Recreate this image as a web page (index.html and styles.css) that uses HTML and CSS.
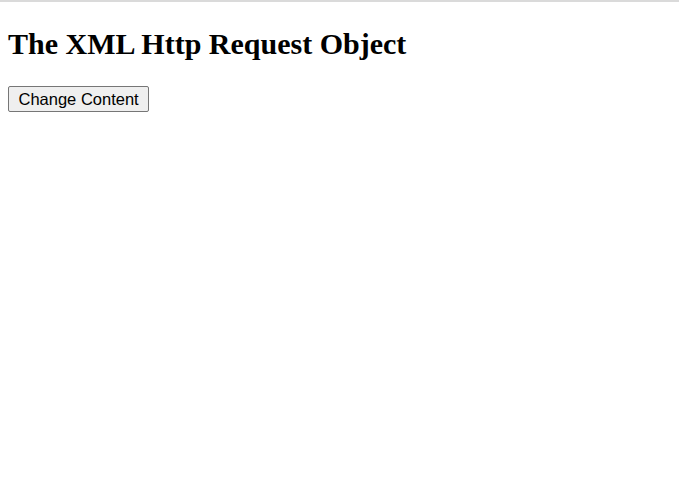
FILE: index.html
```html
<!DOCTYPE html>
<html>
<head>
<meta charset="utf-8">
<link rel="stylesheet" href="styles.css">
</head>
<body>
<div class="topline"></div>
<div class="content">
<h2 class="title">The XML Http Request Object</h2>
<button class="btn" type="button">Change Content</button>
</div>
</body>
</html>
```
FILE: styles.css
```css
html, body { margin: 0; padding: 0; background: #fff; }
.topline { height: 2px; background: #dadada; }
.content { padding: 0 8px; }
.title {
  font-family: "Liberation Serif", serif;
  font-weight: bold;
  font-size: 30px;
  margin: 0;
  padding-top: 25px;
  line-height: 34px;
  color: #000;
}
.btn {
  display: block;
  margin-top: 25px;
  font-family: "Liberation Sans", Arial, sans-serif;
  font-size: 16.5px;
  line-height: 20px;
  color: #000;
  background: #efefef;
  border: 1px solid #767676;
  border-radius: 2px;
  padding: 2px 9.5px;
  height: 26px;
}
```
